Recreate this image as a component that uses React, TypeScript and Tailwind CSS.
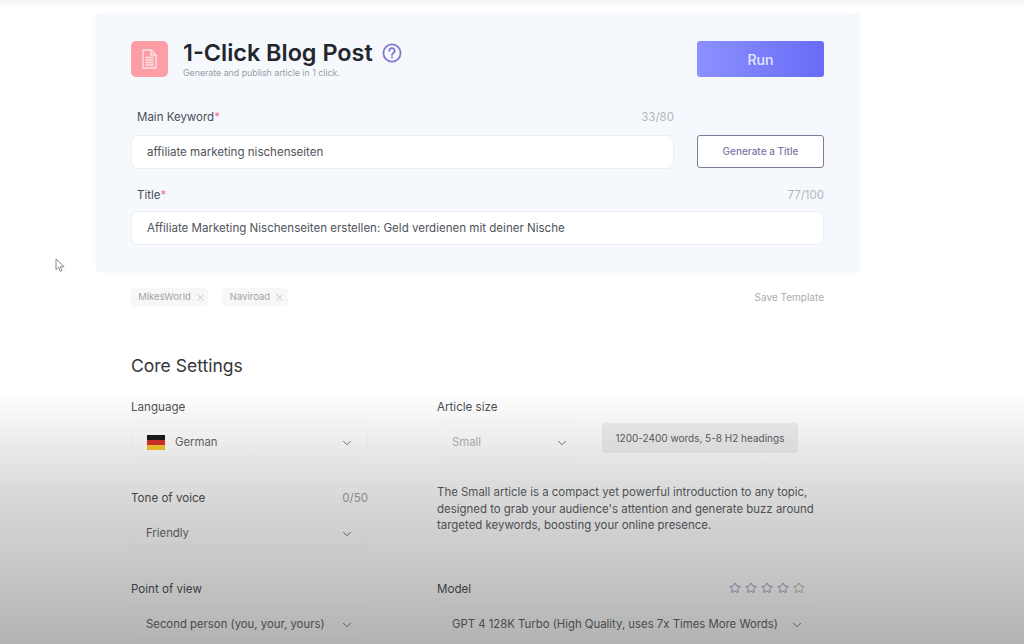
import React from "react";
import { ChevronDown, X, Star } from "lucide-react";

const font = { fontFamily: "Inter, 'Noto Sans', sans-serif" };

const Req = () => <span className="text-[#f0788c]">*</span>;

const FieldLabel: React.FC<{ children: React.ReactNode; count?: string }> = ({ children, count }) => (
  <div className="flex justify-between items-center h-[18px] px-[6px] text-[11.5px] text-[#4a4d55]">
    <span>{children}</span>
    {count && <span className="text-[#b4b6bc] -mr-[6px]">{count}</span>}
  </div>
);

const TextBox: React.FC<{ value: string; className?: string }> = ({ value, className }) => (
  <div className={`h-[34px] flex items-center pl-[15px] pt-[2px] bg-white border border-[#ebeef4] rounded-[6px] text-[11.55px] text-[#50535a] ${className ?? ""}`}>
    {value}
  </div>
);

const Tag: React.FC<{ label: string; width: string }> = ({ label, width }) => (
  <div className={`h-[18px] ${width} flex items-center justify-center gap-[4px] bg-[#f7f7f8] rounded-[4px] text-[9.5px] text-[#a2a4a9]`}>
    <span className="ml-[5px]">{label}</span>
    <X size={11} strokeWidth={1.4} className="text-[#a4a6ab]" />
  </div>
);

const Select: React.FC<{ value: string; className?: string; textClass?: string; flag?: boolean }> = ({
  value,
  className,
  textClass,
  flag,
}) => (
  <div className={`h-[35px] flex items-center justify-between pl-[14px] pr-[13px] pt-[4px] border border-black/[0.02] rounded-[6px] text-[11.35px] ${textClass ?? "text-[#65676c]"} ${className ?? ""}`}>
    <span className="flex items-center gap-[10px] whitespace-nowrap">
      {flag && (
        <span className="w-[18px] h-[14px] ml-[1px] flex flex-col">
          <span className="flex-1 bg-[#1c1c1c]" />
          <span className="flex-1 bg-[#d8322a]" />
          <span className="flex-1 bg-[#f7c52b]" />
        </span>
      )}
      {value}
    </span>
    <ChevronDown size={14} strokeWidth={1.6} className="text-[#6c6e73] shrink-0" />
  </div>
);

export default function App() {
  return (
    <div className="relative w-[1024px] h-[644px] overflow-hidden bg-white" style={font}>
      <div className="ml-[96px] w-[764px] pt-[14px]">
        {/* top card */}
        <div className="h-[258px] bg-[#f5f9fe] shadow-[0_0_6px_#f5f9fe] pl-[35px] pr-[36px] pt-[27px]">
          <div className="flex justify-between items-start h-[36px]">
            <div className="flex gap-[15px]">
              <div className="w-[37px] h-[36px] rounded-[5px] bg-[#fd9da6] flex items-center justify-center">
                <svg width="15" height="20" viewBox="0 0 15 20" fill="none" stroke="#fde4e6" strokeWidth="1.3">
                  <path d="M1 1h8l5 5v13H1z" />
                  <path d="M9 1v5h5" />
                  <path d="M3.5 8.5h8M3.5 11h8M3.5 13.5h8M3.5 16h8" />
                </svg>
              </div>
              <div className="-mt-[1px]">
                <div className="flex items-center gap-[9px] h-[26px]">
                  <span className="text-[23.4px] font-semibold text-[#24262b] leading-none">1-Click Blog Post</span>
                  <svg width="20" height="20" viewBox="0 0 20 20" fill="none" stroke="#7c78cf" strokeWidth="1.8">
                    <circle cx="10" cy="10" r="8.6" />
                    <path d="M7.4 7.8a2.6 2.6 0 1 1 3.9 2.2c-.9.5-1.3 1-1.3 1.9" strokeLinecap="round" />
                    <path d="M10 14.2v.4" strokeLinecap="round" />
                  </svg>
                </div>
                <div className="text-[8.8px] text-[#9a9ca3] leading-[12px] mt-[1px]">Generate and publish article in 1 click.</div>
              </div>
            </div>
            <div className="w-[127px] h-[36px] rounded-[3px] bg-gradient-to-r from-[#8c90fe] to-[#686bf6] flex items-center justify-center text-[14px] font-medium text-[#e6e8ff]">
              Run
            </div>
          </div>

          <div className="flex gap-[23px] mt-[32px]">
            <div className="w-[543px]">
              <FieldLabel count="33/80">Main Keyword<Req /></FieldLabel>
              <TextBox value="affiliate marketing nischenseiten" className="mt-[8px]" />
            </div>
            <div className="w-[127px] h-[33px] mt-[26px] bg-white border border-[#7d7b96] rounded-[3px] flex items-center justify-center text-[10px] font-medium text-[#7b77a8]">
              Generate a Title
            </div>
          </div>

          <div className="mt-[18px]">
            <FieldLabel count="77/100">Title<Req /></FieldLabel>
            <TextBox value="Affiliate Marketing Nischenseiten erstellen: Geld verdienen mit deiner Nische" className="mt-[6px]" />
          </div>
        </div>

        <div className="pl-[35px] pr-[36px]">
          <div className="flex justify-between items-center mt-[16px] h-[18px]">
            <div className="flex gap-[14px]">
              <Tag label="MikesWorld" width="w-[77px]" />
              <Tag label="Naviroad" width="w-[66px]" />
            </div>
            <span className="text-[10px] text-[#a9abb3]">Save Template</span>
          </div>

          <h2 className="text-[17.5px] leading-[24px] text-[#33353a] mt-[48px]">Core Settings</h2>

          <div className="flex gap-[69px] mt-[20px]">
            {/* left column */}
            <div className="w-[237px]">
              <div className="h-[18px] pt-[2px] flex items-center text-[11.6px] text-[#505257]">Language</div>
              <Select value="German" flag className="mt-[7px]" />
              <div className="h-[18px] pt-[4px] mt-[30px] flex items-center justify-between text-[11.6px] text-[#505257]">
                <span>Tone of voice</span>
                <span className="text-[#a0a2a6]">0/50</span>
              </div>
              <Select value="Friendly" className="mt-[8px]" />
              <div className="h-[18px] pt-[4px] mt-[30px] flex items-center text-[11.6px] text-[#505257]">Point of view</div>
              <Select value="Second person (you, your, yours)" className="mt-[8px]" />
            </div>

            {/* right column */}
            <div className="w-[378px]">
              <div className="h-[18px] pt-[2px] flex items-center text-[11.6px] text-[#505257]">Article size</div>
              <div className="flex gap-[19px] items-start mt-[7px]">
                <Select value="Small" className="w-[146px]" textClass="text-[#b3b5b8]" />
                <div className="w-[196px] h-[30px] bg-[#efeff0] rounded-[3px] flex items-center justify-center text-[10px] text-[#5c5e63] whitespace-nowrap">
                  1200-2400 words, 5-8 H2 headings
                </div>
              </div>
              <p className="mt-[26px] text-[11.45px] leading-[16.5px] text-[#5c5e63] whitespace-nowrap">
                The Small article is a compact yet powerful introduction to any topic,
                <br />
                designed to grab your audience's attention and generate buzz around
                <br />
                targeted keywords, boosting your online presence.
              </p>
              <div className="h-[18px] pt-[2px] mt-[46px] flex items-center justify-between text-[11.6px] text-[#505257]">
                <span>Model</span>
                <span className="flex gap-[4px] mr-[10px] -mt-[4px] text-[#5f5b95]">
                  {[0, 1, 2, 3].map(i => (
                    <Star key={i} size={12} strokeWidth={1.2} />
                  ))}
                  <Star size={12} strokeWidth={1.2} className="text-[#84868a]" />
                </span>
              </div>
              <Select value="GPT 4 128K Turbo (High Quality, uses 7x Times More Words)" className="mt-[8px] w-[381px]" />
            </div>
          </div>
        </div>
      </div>

      {/* video-overlay shading over the page */}
      <div className="absolute inset-x-0 top-0 h-[8px] bg-gradient-to-b from-black/[0.05] to-transparent pointer-events-none" />
      <div className="absolute inset-x-0 top-[390px] bottom-0 bg-gradient-to-b from-transparent via-black/[0.14] via-38% to-black/[0.3] pointer-events-none" />

      {/* mouse cursor */}
      <svg className="absolute left-[55px] top-[258px]" width="11" height="15" viewBox="0 0 11 15" fill="#fff" stroke="#8a8a8a" strokeWidth="1">
        <path d="M1 1v10.5l2.6-2.2 1.7 4 1.7-.7-1.7-3.9H9.2z" />
      </svg>
    </div>
  );
}
